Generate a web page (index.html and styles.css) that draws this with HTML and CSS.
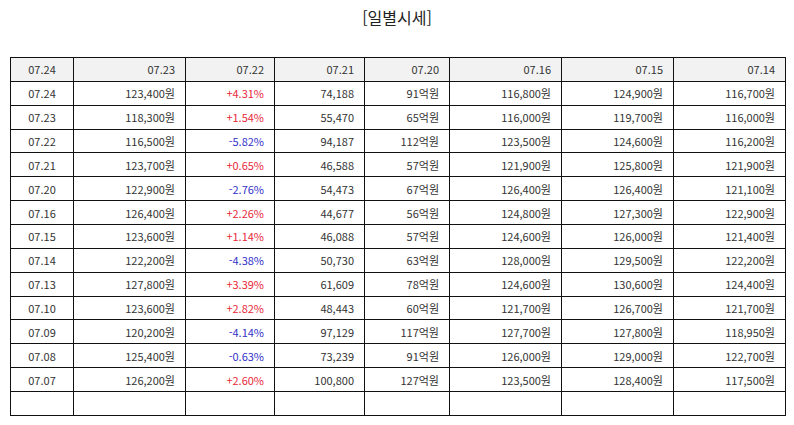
FILE: index.html
```html
<!DOCTYPE html>
<html lang="ko">
<head>
<meta charset="utf-8">
<title>일별시세</title>
<link rel="stylesheet" href="styles.css">
</head>
<body>
<h1 class="title">[일별시세]</h1>
<table class="daily">
<colgroup>
<col class="c1"><col class="c2"><col class="c3"><col class="c4"><col class="c5"><col class="c6"><col class="c7"><col class="c8">
</colgroup>
<thead>
<tr><th class="date">07.24</th><th>07.23</th><th>07.22</th><th>07.21</th><th>07.20</th><th>07.16</th><th>07.15</th><th>07.14</th></tr>
</thead>
<tbody>
<tr><td class="date">07.24</td><td>123,400원</td><td class="up">+4.31%</td><td>74,188</td><td>91억원</td><td>116,800원</td><td>124,900원</td><td>116,700원</td></tr>
<tr><td class="date">07.23</td><td>118,300원</td><td class="up">+1.54%</td><td>55,470</td><td>65억원</td><td>116,000원</td><td>119,700원</td><td>116,000원</td></tr>
<tr><td class="date">07.22</td><td>116,500원</td><td class="down">-5.82%</td><td>94,187</td><td>112억원</td><td>123,500원</td><td>124,600원</td><td>116,200원</td></tr>
<tr><td class="date">07.21</td><td>123,700원</td><td class="up">+0.65%</td><td>46,588</td><td>57억원</td><td>121,900원</td><td>125,800원</td><td>121,900원</td></tr>
<tr><td class="date">07.20</td><td>122,900원</td><td class="down">-2.76%</td><td>54,473</td><td>67억원</td><td>126,400원</td><td>126,400원</td><td>121,100원</td></tr>
<tr><td class="date">07.16</td><td>126,400원</td><td class="up">+2.26%</td><td>44,677</td><td>56억원</td><td>124,800원</td><td>127,300원</td><td>122,900원</td></tr>
<tr><td class="date">07.15</td><td>123,600원</td><td class="up">+1.14%</td><td>46,088</td><td>57억원</td><td>124,600원</td><td>126,000원</td><td>121,400원</td></tr>
<tr><td class="date">07.14</td><td>122,200원</td><td class="down">-4.38%</td><td>50,730</td><td>63억원</td><td>128,000원</td><td>129,500원</td><td>122,200원</td></tr>
<tr><td class="date">07.13</td><td>127,800원</td><td class="up">+3.39%</td><td>61,609</td><td>78억원</td><td>124,600원</td><td>130,600원</td><td>124,400원</td></tr>
<tr><td class="date">07.10</td><td>123,600원</td><td class="up">+2.82%</td><td>48,443</td><td>60억원</td><td>121,700원</td><td>126,700원</td><td>121,700원</td></tr>
<tr><td class="date">07.09</td><td>120,200원</td><td class="down">-4.14%</td><td>97,129</td><td>117억원</td><td>127,700원</td><td>127,800원</td><td>118,950원</td></tr>
<tr><td class="date">07.08</td><td>125,400원</td><td class="down">-0.63%</td><td>73,239</td><td>91억원</td><td>126,000원</td><td>129,000원</td><td>122,700원</td></tr>
<tr><td class="date">07.07</td><td>126,200원</td><td class="up">+2.60%</td><td>100,800</td><td>127억원</td><td>123,500원</td><td>128,400원</td><td>117,500원</td></tr>
<tr><td class="date"></td><td></td><td></td><td></td><td></td><td></td><td></td><td></td></tr>
</tbody>
</table>
</body>
</html>
```

FILE: styles.css
```css
html, body {
  margin: 0;
  padding: 0;
  background: #fff;
}
body {
  font-family: "Noto Sans CJK KR", "Noto Sans", sans-serif;
  color: #333;
  width: 794px;
}
.title {
  margin: 0;
  height: 57px;
  padding-top: 5px;
  box-sizing: border-box;
  text-align: center;
  font-size: 16px;
  font-weight: normal;
  line-height: 24px;
  color: #222;
}
.daily {
  margin-left: 10px;
  border-collapse: collapse;
  table-layout: fixed;
  width: 776px;
  font-size: 11px;
}
.c1 { width: 63px; }
.c2 { width: 112px; }
.c3 { width: 89px; }
.c4 { width: 90px; }
.c5 { width: 85px; }
.c6 { width: 112px; }
.c7 { width: 112px; }
.c8 { width: 112px; }
.daily th,
.daily td {
  border: 1px solid #111;
  height: 22.87px;
  padding: 0 10px 0 0;
  text-align: right;
  font-weight: normal;
  line-height: 14px;
  white-space: nowrap;
  color: #333;
}
.daily th {
  background: #f2f2f2;
}
.daily .date {
  text-align: center;
  padding: 0;
}
.daily .up { color: #e8283a; }
.daily .down { color: #3232c8; }
```
